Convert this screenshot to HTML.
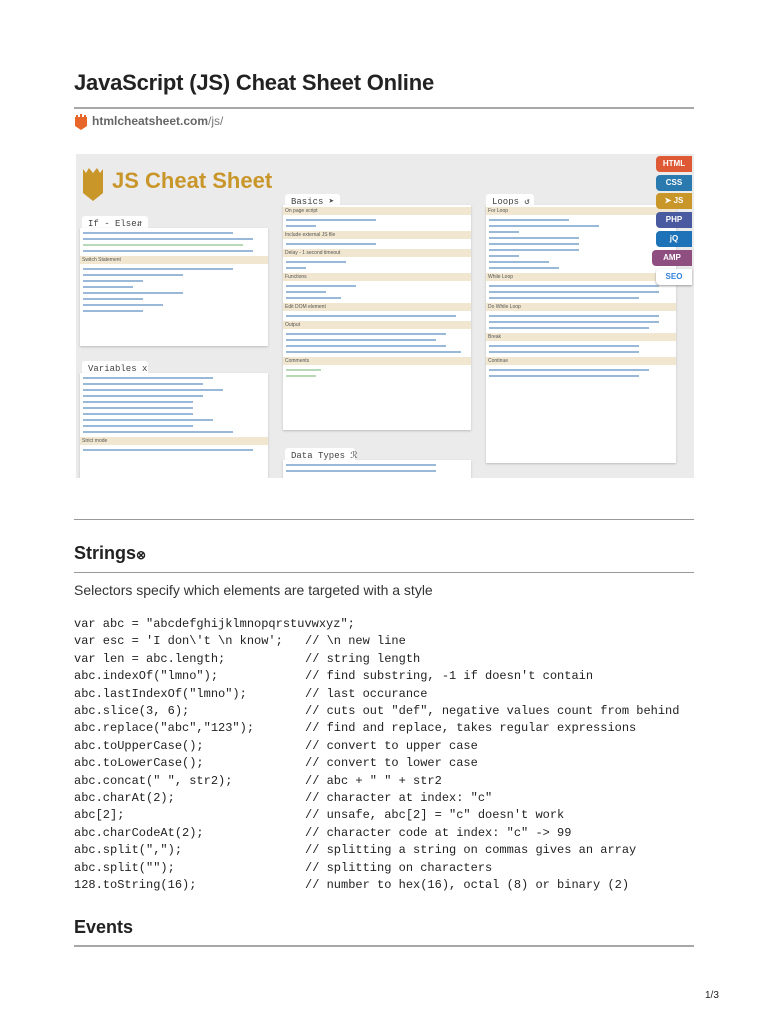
<!DOCTYPE html>
<html><head><meta charset="utf-8">
<style>
*{margin:0;padding:0;box-sizing:border-box}
body{width:768px;height:1024px;background:#fff;position:relative;font-family:"Liberation Sans",Arial,sans-serif;color:#222;overflow:hidden}
.a{position:absolute}
h1{position:absolute;left:74px;top:70px;font-size:22px;font-weight:bold;color:#222;letter-spacing:-0.2px}
.hr{position:absolute;left:74px;width:620px;height:2px;background:#a8a8a8}
.hr1{height:1px;background:#999}
.code{position:absolute;left:74px;top:616px;font-family:"Liberation Mono",monospace;font-size:12px;line-height:17.4px;color:#222;white-space:pre}
.code2{left:305px}
.img{position:absolute;left:76px;top:154px;width:618px;height:324px;background:#ebebeb;overflow:hidden}
.panel{position:absolute;background:#fff;box-shadow:0 1px 2px #bbb}
.tab{position:absolute;background:#fff;font-family:"Liberation Mono",monospace;font-size:9px;color:#444;padding:3px 6px;border-radius:3px 3px 0 0;white-space:nowrap}
.sh{height:8px;background:#f1e6cf;font-size:5px;color:#555;padding-left:2px;line-height:8px;margin:2px 0}
.l{height:2px;margin:4px 3px;background:#9ab8d8}
.g{background:#b8d8b8}
.side{position:absolute;right:2px;width:36px;height:16px;border-radius:4px 0 0 4px;color:#fff;font-size:8px;font-weight:bold;text-align:center;line-height:16px}
</style></head><body>
<h1>JavaScript (JS) Cheat Sheet Online</h1>
<div class="hr" style="top:107px"></div>
<svg class="a" style="left:74px;top:114px" width="14" height="16" viewBox="0 0 14 16"><path d="M1 3h12v9l-6 4-6-4z" fill="#e8662a"/><rect x="2" y="1" width="2" height="3" fill="#e8662a"/><rect x="6" y="0" width="2" height="3" fill="#e8662a"/><rect x="10" y="1" width="2" height="3" fill="#e8662a"/></svg>
<div class="a" style="left:92px;top:114px;font-size:12px;color:#777"><b style="color:#666">htmlcheatsheet.com</b>/js/</div>

<div class="img">
 <svg class="a" style="left:6px;top:13px" width="22" height="34" viewBox="0 0 22 34"><path d="M1 8h20v18l-10 8-10-8z" fill="#c9962a"/><path d="M1 2l3 4 3-5 4 5 4-5 3 5 3-4v6H1z" fill="#c9962a"/></svg>
 <div class="a" style="left:36px;top:14px;font-size:22px;font-weight:bold;color:#c9962a">JS Cheat Sheet</div>
 <div class="tab" style="left:6px;top:62px;width:66px">If - Else⇵</div>
 <div class="panel" style="left:4px;top:74px;width:188px;height:118px">
  <div class="l" style="width:150px"></div><div class="l" style="width:170px"></div><div class="l g" style="width:160px"></div><div class="l" style="width:170px"></div>
  <div class="sh">Switch Statement</div>
  <div class="l" style="width:150px"></div><div class="l" style="width:100px"></div><div class="l" style="width:60px"></div><div class="l" style="width:50px"></div><div class="l" style="width:100px"></div><div class="l" style="width:60px"></div><div class="l" style="width:80px"></div><div class="l" style="width:60px"></div>
 </div>
 <div class="tab" style="left:6px;top:207px;width:66px">Variables x</div>
 <div class="panel" style="left:4px;top:219px;width:188px;height:110px">
  <div class="l" style="width:130px"></div><div class="l" style="width:120px"></div><div class="l" style="width:140px"></div><div class="l" style="width:120px"></div><div class="l" style="width:110px"></div><div class="l" style="width:110px"></div><div class="l" style="width:110px"></div><div class="l" style="width:130px"></div><div class="l" style="width:110px"></div><div class="l" style="width:150px"></div>
  <div class="sh">Strict mode</div><div class="l" style="width:170px"></div>
 </div>
 <div class="tab" style="left:209px;top:40px;width:55px">Basics ➤</div>
 <div class="panel" style="left:207px;top:51px;width:188px;height:225px">
  <div class="sh">On page script</div><div class="l" style="width:90px"></div><div class="l" style="width:30px"></div>
  <div class="sh">Include external JS file</div><div class="l" style="width:90px"></div>
  <div class="sh">Delay - 1 second timeout</div><div class="l" style="width:60px"></div><div class="l" style="width:20px"></div>
  <div class="sh">Functions</div><div class="l" style="width:70px"></div><div class="l" style="width:40px"></div><div class="l" style="width:55px"></div>
  <div class="sh">Edit DOM element</div><div class="l" style="width:170px"></div>
  <div class="sh">Output</div><div class="l" style="width:160px"></div><div class="l" style="width:150px"></div><div class="l" style="width:160px"></div><div class="l" style="width:175px"></div>
  <div class="sh">Comments</div><div class="l g" style="width:35px"></div><div class="l g" style="width:30px"></div>
 </div>
 <div class="tab" style="left:209px;top:294px;width:70px">Data Types ℛ</div>
 <div class="panel" style="left:207px;top:306px;width:188px;height:30px"><div class="l" style="width:150px"></div><div class="l" style="width:150px"></div></div>
 <div class="tab" style="left:410px;top:40px;width:48px">Loops ↺</div>
 <div class="panel" style="left:410px;top:51px;width:190px;height:258px">
  <div class="sh">For Loop</div><div class="l" style="width:80px"></div><div class="l" style="width:110px"></div><div class="l" style="width:30px"></div><div class="l" style="width:90px"></div><div class="l" style="width:90px"></div><div class="l" style="width:90px"></div><div class="l" style="width:30px"></div><div class="l" style="width:60px"></div><div class="l" style="width:70px"></div>
  <div class="sh">While Loop</div><div class="l" style="width:170px"></div><div class="l" style="width:170px"></div><div class="l" style="width:150px"></div>
  <div class="sh">Do While Loop</div><div class="l" style="width:170px"></div><div class="l" style="width:170px"></div><div class="l" style="width:160px"></div>
  <div class="sh">Break</div><div class="l" style="width:150px"></div><div class="l" style="width:150px"></div>
  <div class="sh">Continue</div><div class="l" style="width:160px"></div><div class="l" style="width:150px"></div>
 </div>
 <div class="side" style="top:2px;background:#dd5a35">HTML</div>
 <div class="side" style="top:21px;background:#2a7ab0">CSS</div>
 <div class="side" style="top:39px;background:#c9962a">➤ JS</div>
 <div class="side" style="top:58px;background:#4a5aa0">PHP</div>
 <div class="side" style="top:77px;background:#1e73b8">jQ</div>
 <div class="side" style="top:96px;width:40px;background:#8e4e80">AMP</div>
 <div class="side" style="top:115px;background:#fff;color:#3080d8;box-shadow:0 1px 2px #999">SEO</div>
</div>

<div class="hr hr1" style="top:519px"></div>
<div class="a" style="left:74px;top:543px;font-size:18px;font-weight:bold">Strings<span style="font-size:12px">⊗</span></div>
<div class="hr hr1" style="top:572px"></div>
<div class="a" style="left:74px;top:582px;font-size:14px;color:#333">Selectors specify which elements are targeted with a style</div>
<div class="code">var abc = "abcdefghijklmnopqrstuvwxyz";
var esc = 'I don\'t \n know';
var len = abc.length;
abc.indexOf("lmno");
abc.lastIndexOf("lmno");
abc.slice(3, 6);
abc.replace("abc","123");
abc.toUpperCase();
abc.toLowerCase();
abc.concat(" ", str2);
abc.charAt(2);
abc[2];
abc.charCodeAt(2);
abc.split(",");
abc.split("");
128.toString(16);</div>
<div class="code code2" style="top:633.4px">// \n new line
// string length
// find substring, -1 if doesn't contain
// last occurance
// cuts out "def", negative values count from behind
// find and replace, takes regular expressions
// convert to upper case
// convert to lower case
// abc + " " + str2
// character at index: "c"
// unsafe, abc[2] = "c" doesn't work
// character code at index: "c" -> 99
// splitting a string on commas gives an array
// splitting on characters
// number to hex(16), octal (8) or binary (2)</div>
<div class="a" style="left:74px;top:917px;font-size:18px;font-weight:bold">Events</div>
<div class="hr" style="top:945px"></div>
<div class="a" style="left:705px;top:990px;font-size:10px">1/3</div>
</body></html>
